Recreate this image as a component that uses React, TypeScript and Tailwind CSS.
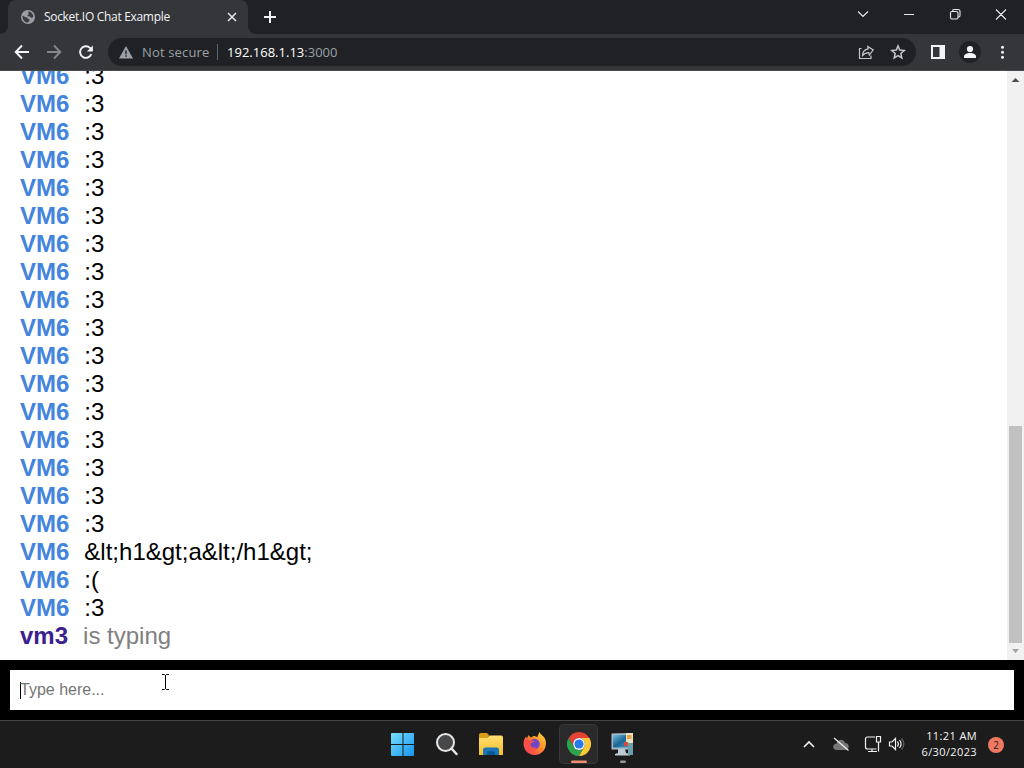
import React from "react";

const ui = "font-['Open_Sans','Noto_Sans',sans-serif]";

const messages: string[] = [
  ...Array.from({ length: 17 }, () => ":3"),
  "&lt;h1&gt;a&lt;/h1&gt;",
  ":(",
  ":3",
];

function TabStrip() {
  return (
    <div className="flex h-[34px] shrink-0 bg-[#202124]">
      <div className="flex w-2 items-end overflow-hidden bg-[#35363a]">
        <div className="h-full w-2 rounded-br-lg bg-[#202124]" />
      </div>
      <div className="flex h-full w-60 items-center rounded-t-lg bg-[#35363a] pl-[13px]">
        <svg width="14" height="14" viewBox="0 0 14 14" className="shrink-0">
          <circle cx="7" cy="7" r="7" fill="#9b9fa4" />
          <path d="M1.500 5.500 4.500 7.300l1.700.2.800 1.600 1.600.3-.3 1.500-1.600 1.700C3.600 12.400 1.200 9.500 1.500 5.500ZM7 1.500c2.600 0 4.800 1.800 5.400 4.500l-.9 1.800-1.700-.1-.7-1.200-2.300-.3-.3-1.300 1.300-.7Z" fill="#3a3b3e" />
        </svg>
        <span className={`${ui} ml-[9px] w-[128px] whitespace-nowrap text-[12px] leading-4 tracking-[-0.31px] text-[#f1f3f4]`}>
          Socket.IO Chat Example
        </span>
        <svg width="10" height="10" viewBox="0 0 10 10" className="ml-[55px]" stroke="#e8eaed" strokeWidth="1.5">
          <path d="m1 1 8 8M9 1 1 9" />
        </svg>
      </div>
      <div className="flex w-2 bg-[#35363a]">
        <div className="h-full w-2 rounded-bl-lg bg-[#202124]" />
      </div>
      <svg width="14" height="14" viewBox="0 0 14 14" className="ml-[7px] mt-[10px]" stroke="#f1f3f4" strokeWidth="2">
        <path d="M7 1v12M1 7h12" />
      </svg>
      <div className="ml-auto flex h-[29px] items-center">
        <svg width="184" height="29" viewBox="840 0 184 29" fill="none" stroke="#e8eaed" strokeWidth="1.1">
          <path d="m858 11.500 5 5 5-5M904 14.500h10M996 9.500l10 10M1006 9.500l-10 10" />
          <rect x="950.500" y="11.500" width="7.500" height="7.500" rx="1.500" />
          <path d="M952.500 11.500v-.5c0-.8.600-1.500 1.500-1.500h4c1.200 0 2 .8 2 2v4c0 .9-.7 1.500-1.500 1.500h-.5" />
        </svg>
      </div>
    </div>
  );
}

function Toolbar() {
  return (
    <div className="flex h-[37px] shrink-0 items-center border-b border-[#48494d] bg-[#35363a]">
      <svg width="108" height="36" viewBox="0 0 108 36" fill="none" strokeWidth="1.900">
        <path d="M29 18H16M22 11.500 15.700 18l6.300 6.500" stroke="#f1f3f4" />
        <path d="M47 18h13M54 11.500l6.300 6.500-6.300 6.500" stroke="#85878a" />
        <path d="M91.300 20.200a5.800 5.800 0 1 1-1.300-6.300l1.800 1.800" stroke="#f1f3f4" />
        <path d="M92.900 11.500v6h-6z" fill="#f1f3f4" />
      </svg>
      <div className={`${ui} flex h-7 w-[808px] items-center rounded-full bg-[#202124] text-[14px] leading-5`}>
        <svg width="14" height="13" viewBox="0 0 14 13" className="ml-[11px]">
          <path d="M7 0 14 12.500H0Z" fill="#9aa0a6" />
          <path d="M6.300 4.500h1.400v3.700H6.300zM6.300 9.300h1.400v1.400H6.300z" fill="#202124" />
        </svg>
        <span className="ml-[9px] w-[67px] whitespace-nowrap text-[13px] tracking-[0.15px] text-[#9aa0a6]">Not secure</span>
        <span className="ml-2 h-4 w-px bg-[#5f6368]" />
        <span className="ml-[9px] whitespace-nowrap text-[13px] tracking-[0.01px] text-white">
          192.168.1.13<span className="text-[#9aa0a6]">:3000</span>
        </span>
        <svg width="60" height="28" viewBox="856 38 60 28" className="ml-auto" fill="none" stroke="#c4c7ca">
          <path d="M861.500 48.500h-2v10h11.500V55.500" strokeWidth="1.200" />
          <path d="m867.800 46.500 5.400 3.500-3.900 5-.5-2.400c-2.800.1-4.700 1-6.300 3 .1-3.700 2-6.200 5.700-6.800Z" strokeWidth="1.200" />
          <path d="m898 45.900 1.700 4.200 4.500.4-3.400 3 1 4.400-3.800-2.300-3.800 2.300 1-4.400-3.400-3 4.500-.4Z" strokeWidth="1.500" />
        </svg>
      </div>
      <svg width="108" height="36" viewBox="916 34 108 36">
        <path d="M932 46h12v12h-12z" fill="none" stroke="#f1f3f4" strokeWidth="2" />
        <path d="M939.500 46h5v12h-5z" fill="#f1f3f4" />
        <circle cx="970" cy="52" r="11" fill="#202124" />
        <circle cx="970" cy="49" r="3.100" fill="#f1f3f4" />
        <path d="M964 58v-1.500c0-2.300 3-3.500 6-3.500s6 1.200 6 3.500V58Z" fill="#f1f3f4" />
        <g fill="#f1f3f4"><circle cx="1002.500" cy="47.300" r="1.500" /><circle cx="1002.500" cy="52.300" r="1.500" /><circle cx="1002.500" cy="57.300" r="1.500" /></g>
      </svg>
    </div>
  );
}

function Chat() {
  return (
    <div className="flex h-[589px] shrink-0 bg-white">
      <div className="flex min-w-0 flex-1 flex-col justify-end overflow-hidden pb-[10px] pl-5 text-[24px] leading-7 text-black">
        {messages.map((message, index) => (
          <div key={index} className="flex h-7 shrink-0">
            <b className="mr-[15px] text-[#4384dc]">VM6</b>
            <span>{message}</span>
          </div>
        ))}
        <div className="flex h-7 shrink-0">
          <b className="mr-[15px] text-[#3b2190]">vm3</b>
          <span className="text-[#808080]">is typing</span>
        </div>
      </div>
      <div className="flex w-[17px] flex-col items-center bg-[#f1f1f1]">
        <svg width="17" height="17" viewBox="0 0 17 17"><path d="m4.500 11 4-4 4 4Z" fill="#505050" /></svg>
        <div className="mt-[338px] h-[217px] w-[13px] bg-[#c1c1c1]" />
        <svg width="17" height="17" viewBox="0 0 17 17"><path d="m5 6 3.500 4L12 6Z" fill="#a3a3a3" /></svg>
      </div>
    </div>
  );
}

function Composer() {
  return (
    <div className="relative h-[60px] shrink-0 bg-black p-[10px]">
      <div className="flex h-10 items-center bg-white pl-[10px] text-[16px] text-[#757575]">
        <span className="h-[17px] w-px bg-black" />
        <span className="-ml-px">Type here...</span>
      </div>
      <svg width="9" height="16" viewBox="0 0 9 16" className="absolute left-[161px] top-[14px]" fill="none" stroke="#000">
        <path d="M1 .5h2.500l1 1 1-1H8M4.500 1v14M1 15.500h2.500l1-1 1 1H8" />
      </svg>
    </div>
  );
}

function Taskbar() {
  return (
    <div className="flex h-12 shrink-0 items-center border-t border-[#454545] bg-[#1c1c1c]">
      <svg width="270" height="47" viewBox="380 721 270 47" className="ml-[380px]">
        <defs>
          <linearGradient id="win" x1="0" y1="0" x2="1" y2="1"><stop stopColor="#78dfff" /><stop offset="1" stopColor="#1594ee" /></linearGradient>
          <linearGradient id="folder" x1="0" y1="0" x2="0" y2="1"><stop stopColor="#ffdf70" /><stop offset="1" stopColor="#f7bd2c" /></linearGradient>
          <linearGradient id="fox" x1="1" y1="0" x2="0" y2="1"><stop stopColor="#ffe548" /><stop offset=".45" stopColor="#ff8a28" /><stop offset="1" stopColor="#f02865" /></linearGradient>
          <linearGradient id="screen" x1="0" y1="0" x2="1" y2="1"><stop stopColor="#73bddd" /><stop offset=".5" stopColor="#1a6695" /><stop offset="1" stopColor="#48a3c7" /></linearGradient>
        </defs>
        <path d="M392 733h10.500v11H391v-10a1 1 0 0 1 1-1ZM403.500 733H413a1 1 0 0 1 1 1v10h-10.500ZM391 745h11.500v11H392a1 1 0 0 1-1-1ZM403.500 745H414v10a1 1 0 0 1-1 1h-9.500Z" fill="url(#win)" />
        <circle cx="445.500" cy="742.500" r="8.500" fill="#46484a" stroke="#e7e7e7" strokeWidth="2" />
        <path d="m451.500 748.500 5 5.500" stroke="#e7e7e7" strokeWidth="2.500" strokeLinecap="round" />
        <path d="M479 735c0-1.200.8-2 2-2h6l2 2-2 4h-8Z" fill="#d99b18" />
        <path d="M479 738h8l2.500-2.500H501c1.200 0 2 .8 2 2V755h-24Z" fill="url(#folder)" />
        <path d="M483 755v-5c0-1.700 1-2.500 2.500-2.500h11c1.500 0 2.500.8 2.500 2.500v5Z" fill="#1976b9" />
        <path d="M487 755v-2.500c0-.8.500-1.200 1.200-1.200h5.600c.7 0 1.200.4 1.200 1.200v2.500Z" fill="#075795" />
        <path d="M539.500 732c1 3 5 4 6 8 2 8-3 15-11 15-6.500 0-11-5-11-11.500 0-3 1.200-5.500 2.700-7l.8 2.200 1.400-3.700 2.300 2.500 3-1.500c1.700 0 2.500.7 3.500 1.200Z" fill="url(#fox)" />
        <circle cx="534.500" cy="744" r="5.200" fill="#6f48c9" />
        <path d="M524 740c2-1 4-1 6 0l4.500 1c-1 1.500-3.500 1.500-4 3.500 0 3 3.500 4 6 2.500-.5 2.500-3 4-6 3.800-4-.2-7-4-6.500-10.800Z" fill="#fb4f48" />
        <rect x="559.500" y="724.500" width="38" height="39" rx="4" fill="#2a2a2a" stroke="#383838" />
        <path d="M568.600 738a12 12 0 0 1 20.800 0H579a6 6 0 0 0-5.200 9Z" fill="#e54335" />
        <path d="M568.600 738a12 12 0 0 0 10.400 18l5.200-9a6 6 0 0 1-10.400 0Z" fill="#2ba24c" />
        <path d="M579 756a12 12 0 0 0 10.400-18H579a6 6 0 0 1 5.200 9Z" fill="#fcc934" />
        <circle cx="579" cy="744" r="5.900" fill="#fff" /><circle cx="579" cy="744" r="4.600" fill="#287ae8" />
        <rect x="571" y="760.500" width="16" height="2.600" rx="1.300" fill="#f08c70" />
        <path d="m611.500 733.500 20-.5v16.500h-20Z" fill="#a7bcc7" />
        <path d="M613 735h17.500v12.500H613z" fill="url(#screen)" />
        <path d="M618 749h7l1 4 4 1v1.500h-15V754l3-1Z" fill="#bccbd1" />
        <path d="M626 733h7v13h-7Z" fill="#e9e1c8" /><path d="M627 735h4.500v4H627z" fill="#e5a345" />
        <path d="M624 742h4v4h-4z" fill="#d34c3a" /><path d="M628 743h5v12h-5z" fill="#6b9fad" />
        <rect x="620" y="760.500" width="6" height="2.500" rx="1.200" fill="#949494" />
      </svg>
      <svg width="120" height="47" viewBox="790 721 120 47" className="ml-[140px]" fill="none" stroke="#f1f1f1" strokeWidth="1.200">
        <path d="m804 747 5-5 5 5" strokeWidth="1.600" />
        <path d="M837 750c-5 0-5-6-.5-6.500 1-5 7.500-5 8.500-.5 5 0 5 7 0 7Z" fill="#777" stroke="none" />
        <path d="m834 738 14.500 12.500" />
        <path d="M875 737h-7.500c-1 0-2 1-2 2v8c0 1.200.8 2 2 2h9M872 749v2.500M868 751.500h9M876.500 736.500h4V742h-4zM878.500 742v9.500" />
        <path d="M889.500 742h2.500l3.500-3.500v11L892 746h-2.500ZM897.500 741.500c1 1.500 1 3.500 0 5M899.500 740c2 2.500 2 5.500 0 8" />
        <path d="M901.500 738.500c3 3.500 3 7.500 0 11" stroke="#606060" />
      </svg>
      <div className={`${ui} -mt-0.5 w-[67px] whitespace-nowrap text-right text-[11px] leading-4 tracking-[0.38px] text-[#f5f5f5]`}>
        <div>11:21 AM</div>
        <div>6/30/2023</div>
      </div>
      <div className={`${ui} ml-[11px] flex h-4 w-4 items-center justify-center rounded-full bg-[#f07860] text-[10px] leading-4 text-[#25201f]`}>2</div>
    </div>
  );
}

export default function App() {
  return (
    <div className="flex h-[768px] w-[1024px] flex-col overflow-hidden font-['Liberation_Sans',Arial,sans-serif]">
      <TabStrip />
      <Toolbar />
      <Chat />
      <Composer />
      <Taskbar />
    </div>
  );
}
